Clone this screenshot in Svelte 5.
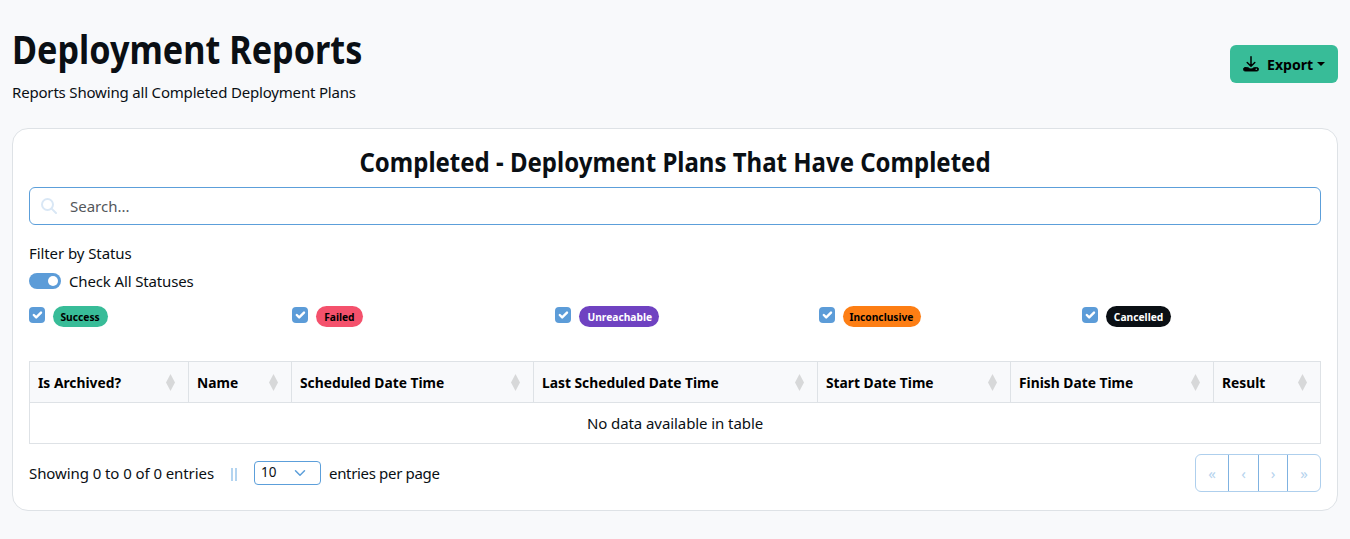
<script>
  const statuses = [
    { label: 'Success', kind: 'success', width: 55 },
    { label: 'Failed', kind: 'failed', width: 47 },
    { label: 'Unreachable', kind: 'unreachable', width: 80 },
    { label: 'Inconclusive', kind: 'inconclusive', width: 78 },
    { label: 'Cancelled', kind: 'cancelled', width: 65 }
  ];
  const columns = [
    { label: 'Is Archived?', width: 159 },
    { label: 'Name', width: 103 },
    { label: 'Scheduled Date Time', width: 242 },
    { label: 'Last Scheduled Date Time', width: 284 },
    { label: 'Start Date Time', width: 193 },
    { label: 'Finish Date Time', width: 203 },
    { label: 'Result', width: 107 }
  ];
</script>

<main>
  <header>
    <div class="titles">
      <h1>Deployment Reports</h1>
      <span class="subtitle">Reports Showing all Completed Deployment Plans</span>
    </div>
    <button class="export">
      <svg width="16" height="16" viewBox="0 0 16 16" fill="none" stroke="#000" stroke-linecap="round" stroke-linejoin="round">
        <path d="M8 .8v9.400M4.200 6.500 8 10.200l3.800-3.700" stroke-width="1.500" />
        <path d="M2.200 11.500h2.400c1 0 1.700 1.400 3.400 1.400s2.400-1.400 3.400-1.400h2.400a1.800 1.800 0 0 1 0 3.600H2.200a1.800 1.800 0 0 1 0-3.600Z" fill="#000" stroke-width=".8" />
        <circle cx="13.300" cy="13.300" r=".8" fill="#38bc98" stroke="none" />
      </svg>
      <span>Export</span>
      <i class="caret"></i>
    </button>
  </header>

  <section class="card">
    <h2><span>Completed - Deployment Plans That Have Completed</span></h2>
    <div class="search">
      <svg width="16" height="16" viewBox="0 0 16 16" fill="none" stroke="#d9e7f5" stroke-width="2" stroke-linecap="round"><circle cx="6.500" cy="6.500" r="5.500" /><path d="m10.600 10.600 4.400 4.400" /></svg>
      <span>Search...</span>
    </div>
    <div class="line"><span class="label">Filter by Status</span></div>
    <div class="switch-row"><i class="switch"></i><span class="switch-label">Check All Statuses</span></div>
    <div class="statuses">
      {#each statuses as s}
        <div class="status">
          <i class="check"><svg width="16" height="16" viewBox="0 0 20 20" fill="none" stroke="#fff" stroke-width="3" stroke-linecap="round" stroke-linejoin="round"><path d="m6 10 3 3 6-6" /></svg></i>
          <b class="badge {s.kind}" style:width="{s.width}px"><span>{s.label}</span></b>
        </div>
      {/each}
    </div>
    <table>
      <colgroup>{#each columns as c}<col style:width="{c.width}px" />{/each}</colgroup>
      <thead>
        <tr>
          {#each columns as c}
            <th><div><span>{c.label}</span><svg width="9" height="17" viewBox="0 0 9 17" fill="#d7d8d9"><path d="M4.500 0 9 8.500 4.500 17 0 8.500z" /></svg></div></th>
          {/each}
        </tr>
      </thead>
      <tbody><tr><td colspan="7"><span>No data available in table</span></td></tr></tbody>
    </table>
    <footer>
      <span class="showing">Showing 0 to 0 of 0 entries</span>
      <i class="bars"></i>
      <div class="select"><span class="num">10</span><svg width="12" height="12" viewBox="0 0 16 16" fill="none" stroke="#5c9fda" stroke-width="2" stroke-linecap="round" stroke-linejoin="round"><path d="m2 5 6 6 6-6" /></svg></div>
      <span class="per">entries per page</span>
      <nav class="pager"><span>«</span><span>‹</span><span>›</span><span>»</span></nav>
    </footer>
  </section>
</main>

<style>
  :global(body) { background: #f8f9fb; }
  main { box-sizing: border-box; height: 539px; padding: 25px 12px 0; font: 15px/24px 'Noto Sans', sans-serif; color: #0a0f14; background: #f8f9fb; white-space: nowrap; }
  header { display: flex; justify-content: space-between; height: 103px; }
  .titles { display: flex; flex-direction: column; align-items: flex-start; }
  h1 { margin: 0 0 7px; font-size: 39px; line-height: 48px; font-weight: 700; transform: scaleX(.877); transform-origin: left; }
  .subtitle { letter-spacing: -.18px; }
  .export { display: flex; align-items: center; box-sizing: border-box; width: 108px; height: 38px; margin: 20px 0 0; padding: 0 0 0 13px; border: 0; border-radius: 6px; background: #38bc98; color: #000; font: 700 15px/24px 'Noto Sans', sans-serif; }
  .export span { width: 46px; margin-left: 8px; transform: scaleX(.94); transform-origin: left; }
  .caret { margin-left: 4px; border: 4.500px solid transparent; border-top-color: #000; border-bottom: 0; }
  .card { box-sizing: border-box; height: 383px; padding: 16px; border: 1px solid #dee2e6; border-radius: 16px; background: #fff; }
  h2 { margin: 0 0 8px; font-size: 27px; line-height: 34px; font-weight: 700; text-align: center; transform: scaleX(.889); }
  .search { display: flex; align-items: center; box-sizing: border-box; height: 38px; padding-left: 11px; gap: 13px; border: 1px solid #5c9fda; border-radius: 6px; color: #53575b; }
  .line { margin-top: 16px; height: 24px; letter-spacing: -.08px; }
  .switch-row { display: flex; align-items: center; gap: 8px; height: 24px; margin-top: 4px; letter-spacing: -.14px; }
  .switch { display: flex; align-items: center; justify-content: flex-end; box-sizing: border-box; width: 32px; height: 16px; padding-right: 3px; border-radius: 8px; background: #5c9cd8; }
  .switch::after { content: ''; width: 10px; height: 10px; border-radius: 50%; background: #fff; }
  .statuses { display: grid; grid-template-columns: repeat(5, 263.200px); height: 21px; margin-top: 13px; }
  .status { display: flex; gap: 8px; }
  .check { width: 16px; height: 16px; margin-top: 1px; border-radius: 4px; background: #5c9cd8; line-height: 0; }
  .badge { display: flex; justify-content: center; height: 21px; border-radius: 11px; font-size: 11px; line-height: 22px; color: #000; }
  .badge span { transform: scaleX(.93); }
  .success { background: #38bc98; }
  .failed { background: #f4516c; }
  .unreachable { background: #6f42c1; color: #fff; }
  .inconclusive { background: #fd7e14; }
  .cancelled { background: #0a0f14; color: #fff; }
  table { width: 1292px; margin-top: 34px; border-collapse: collapse; table-layout: fixed; }
  th, td { box-sizing: border-box; height: 41px; padding: 0 8px; border: 1px solid #dee2e6; }
  th { background: #f8f9fb; color: #000; font-weight: 700; }
  th div { display: flex; align-items: center; justify-content: space-between; padding-right: 5.500px; }
  th span { transform: scaleX(.92); transform-origin: left; }
  td { text-align: center; letter-spacing: -.08px; }
  footer { display: flex; align-items: center; height: 38px; margin-top: 10px; }
  .showing { letter-spacing: -.08px; }
  .bars { width: 2px; height: 13px; margin: 2px 17px 0; border: solid #b3d4f0; border-width: 0 2px; }
  .select { display: flex; align-items: center; justify-content: space-between; box-sizing: border-box; width: 67px; height: 24px; margin-top: -1px; padding: 0 14px 0 6px; border: 1px solid #5c9fda; border-radius: 4px; font-size: 13.500px; line-height: 21px; }
  .per { margin-left: 8px; letter-spacing: -.33px; }
  .pager { display: grid; grid-template-columns: 32px 30px 29px 33px; box-sizing: border-box; width: 126px; height: 38px; margin-left: auto; border: 1px solid #aecfed; border-radius: 6px; color: #b6d3ee; line-height: 36px; text-align: center; }
  .pager span + span { border-left: 1px solid #7fb2e1; }
</style>
